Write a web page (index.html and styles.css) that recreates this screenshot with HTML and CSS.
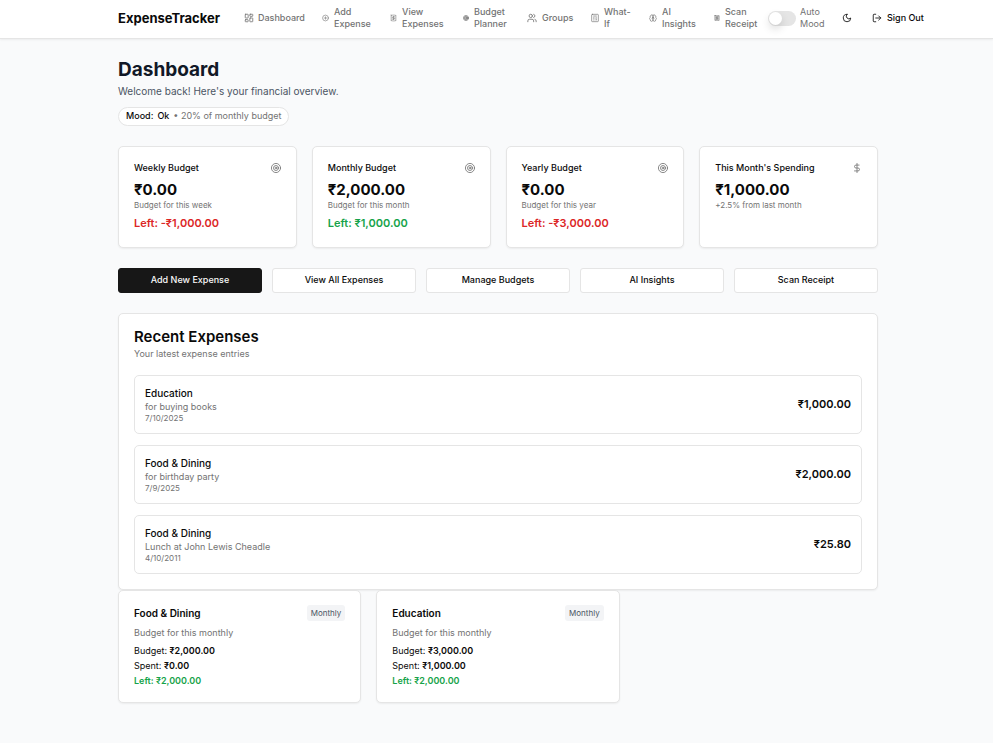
FILE: index.html
```html
<!DOCTYPE html>
<html lang="en">
<head>
<meta charset="utf-8">
<meta name="viewport" content="width=device-width, initial-scale=1">
<title>ExpenseTracker</title>
<link rel="stylesheet" href="styles.css">
</head>
<body>
<header class="topbar">
  <div class="container topbar-row">
    <a class="brand" href="#">ExpenseTracker</a>
    <nav class="nav">
      <a class="wide" href="#"><svg class="icon w10" viewBox="0 0 24 24"><rect x="3" y="3" width="7" height="9" rx="1"/><rect x="14" y="3" width="7" height="5" rx="1"/><rect x="14" y="12" width="7" height="9" rx="1"/><rect x="3" y="16" width="7" height="5" rx="1"/></svg><span>Dashboard</span></a>
      <a href="#"><svg class="icon w7" viewBox="0 0 24 24"><circle cx="12" cy="12" r="10"/><path d="M8 12h8M12 8v8"/></svg><span>Add<br>Expense</span></a>
      <a href="#"><svg class="icon w7" viewBox="0 0 24 24"><path d="M4 2v20l2-1 2 1 2-1 2 1 2-1 2 1 2-1 2 1V2l-2 1-2-1-2 1-2-1-2 1-2-1-2 1Z"/><path d="M16 8h-6a2 2 0 1 0 0 4h4a2 2 0 1 1 0 4H8M12 17.500V6.500"/></svg><span>View<br>Expenses</span></a>
      <a href="#"><svg class="icon w6 dense" viewBox="0 0 24 24"><circle cx="12" cy="12" r="10"/><circle cx="12" cy="12" r="6"/><circle cx="12" cy="12" r="2"/></svg><span>Budget<br>Planner</span></a>
      <a href="#"><svg class="icon w10" viewBox="0 0 24 24"><path d="M16 21v-2a4 4 0 0 0-4-4H6a4 4 0 0 0-4 4v2"/><circle cx="9" cy="7" r="4"/><path d="M22 21v-2a4 4 0 0 0-3-3.870M16 3.130a4 4 0 0 1 0 7.750"/></svg><span>Groups</span></a>
      <a href="#"><svg class="icon w8" viewBox="0 0 24 24"><rect x="2" y="1" width="20" height="22" rx="2"/><path d="M8 6h8M16 14v4M16 10h.01M12 10h.01M8 10h.01M12 14h.01M8 14h.01M12 18h.01M8 18h.01"/></svg><span>What-<br>If</span></a>
      <a href="#"><svg class="icon w8" viewBox="0 0 24 24"><path d="M12 5a3 3 0 1 0-5.997.125 4 4 0 0 0-2.526 5.770 4 4 0 0 0 .556 6.588A4 4 0 1 0 12 18Z"/><path d="M12 5a3 3 0 1 1 5.997.125 4 4 0 0 1 2.526 5.770 4 4 0 0 1-.556 6.588A4 4 0 1 1 12 18Z"/><path d="M15 13a4.500 4.500 0 0 1-3-4 4.500 4.500 0 0 1-3 4"/></svg><span>AI<br>Insights</span></a>
      <a href="#"><svg class="icon w6 dense" viewBox="0 0 24 24"><path d="M4 2v20l2-1 2 1 2-1 2 1 2-1 2 1 2-1 2 1V2l-2 1-2-1-2 1-2-1-2 1-2-1-2 1Z"/><path d="M16 8h-6a2 2 0 1 0 0 4h4a2 2 0 1 1 0 4H8M12 17.500V6.500"/></svg><span>Scan<br>Receipt</span></a>
    </nav>
    <label class="mood-switch"><input type="checkbox" role="switch"><span>Auto<br>Mood</span></label>
    <button class="theme" type="button" aria-label="Toggle theme"><svg class="icon w10" viewBox="0 0 24 24"><path d="M12 3a6 6 0 0 0 9 9 9 9 0 1 1-9-9Z"/></svg></button>
    <button class="signout" type="button"><svg class="icon w10" viewBox="0 0 24 24"><path d="M9 21H5a2 2 0 0 1-2-2V5a2 2 0 0 1 2-2h4M16 17l5-5-5-5M21 12H9"/></svg>Sign Out</button>
  </div>
</header>
<main class="container">
  <h1>Dashboard</h1>
  <p class="welcome">Welcome back! Here's your financial overview.</p>
  <div class="mood"><strong>Mood:</strong><span>Ok</span><span class="muted">• 20% of monthly budget</span></div>

  <section class="stats">
    <article class="card stat">
      <header><h2>Weekly Budget</h2><svg class="icon w10" viewBox="0 0 24 24"><circle cx="12" cy="12" r="11"/><circle cx="12" cy="12" r="6"/><circle cx="12" cy="12" r="2"/></svg></header>
      <p class="amount">₹0.00</p><p class="note">Budget for this week</p><p class="left over">Left: -₹1,000.00</p>
    </article>
    <article class="card stat">
      <header><h2>Monthly Budget</h2><svg class="icon w10" viewBox="0 0 24 24"><circle cx="12" cy="12" r="11"/><circle cx="12" cy="12" r="6"/><circle cx="12" cy="12" r="2"/></svg></header>
      <p class="amount">₹2,000.00</p><p class="note">Budget for this month</p><p class="left">Left: ₹1,000.00</p>
    </article>
    <article class="card stat">
      <header><h2>Yearly Budget</h2><svg class="icon w10" viewBox="0 0 24 24"><circle cx="12" cy="12" r="11"/><circle cx="12" cy="12" r="6"/><circle cx="12" cy="12" r="2"/></svg></header>
      <p class="amount">₹0.00</p><p class="note">Budget for this year</p><p class="left over">Left: -₹3,000.00</p>
    </article>
    <article class="card stat">
      <header><h2>This Month's Spending</h2><svg class="icon w10" viewBox="0 0 24 24"><path d="M12 1v22M17 5H9.500a3.500 3.500 0 0 0 0 7h5a3.500 3.500 0 0 1 0 7H6"/></svg></header>
      <p class="amount">₹1,000.00</p><p class="note">+2.5% from last month</p>
    </article>
  </section>

  <div class="actions">
    <button class="primary" type="button">Add New Expense</button>
    <button type="button">View All Expenses</button>
    <button type="button">Manage Budgets</button>
    <button type="button">AI Insights</button>
    <button type="button">Scan Receipt</button>
  </div>

  <section class="card recent">
    <h2>Recent Expenses</h2>
    <p class="sub">Your latest expense entries</p>
    <ul class="expenses">
      <li><div><h3>Education</h3><p>for buying books</p><time>7/10/2025</time></div><strong>₹1,000.00</strong></li>
      <li><div><h3>Food &amp; Dining</h3><p>for birthday party</p><time>7/9/2025</time></div><strong>₹2,000.00</strong></li>
      <li><div><h3>Food &amp; Dining</h3><p>Lunch at John Lewis Cheadle</p><time>4/10/2011</time></div><strong>₹25.80</strong></li>
    </ul>
  </section>

  <section class="budgets">
    <article class="card budget">
      <header><h3>Food &amp; Dining</h3><span class="badge">Monthly</span></header>
      <p class="desc">Budget for this monthly</p>
      <p>Budget: <b>₹2,000.00</b></p><p>Spent: <b>₹0.00</b></p><p class="remaining">Left: ₹2,000.00</p>
    </article>
    <article class="card budget">
      <header><h3>Education</h3><span class="badge">Monthly</span></header>
      <p class="desc">Budget for this monthly</p>
      <p>Budget: <b>₹3,000.00</b></p><p>Spent: <b>₹1,000.00</b></p><p class="remaining">Left: ₹2,000.00</p>
    </article>
  </section>
</main>
</body>
</html>
```
FILE: styles.css
```css
* { box-sizing: border-box; }
body {
  margin: 0;
  padding-left: 3px;
  background: #f9fafb;
  color: #0a0a0a;
  font: 9px/12px Inter, "Liberation Sans", sans-serif;
}
h1, h2, h3, p, ul { margin: 0; padding: 0; }
a { color: inherit; text-decoration: none; }
button { font: inherit; font-weight: 500; color: inherit; cursor: pointer; }
.container { max-width: 760px; margin: 0 auto; }

.icon {
  flex: none;
  fill: none;
  stroke: currentColor;
  stroke-width: 2;
  stroke-linecap: round;
  stroke-linejoin: round;
}
.dense { stroke-width: 3; }
.w6 { width: 6px; height: 10px; }
.w7 { width: 7px; height: 10px; }
.w8 { width: 8px; height: 10px; }
.w10 { width: 10px; height: 10px; }

.topbar {
  margin-left: -3px;
  padding-left: 3px;
  background: #fff;
  border-bottom: 1px solid #e5e5e5;
  box-shadow: 0 1px 2px rgba(0, 0, 0, .06);
}
.topbar-row { display: flex; align-items: center; padding: 6px 0 8px; white-space: nowrap; }
.brand { flex: 0 0 126px; font-size: 13px; line-height: 18px; font-weight: 700; }
.nav {
  display: grid;
  flex: none;
  grid-template-columns: 78px 68px 73px 64px 64px 58px 65px 54px;
  color: #737373;
  font-weight: 500;
}
.nav a { display: flex; align-items: center; gap: 5px; }
.nav .wide { gap: 4px; }
.mood-switch { display: flex; flex: 0 0 74px; align-items: center; gap: 4px; color: #737373; }
.mood-switch input {
  appearance: none;
  flex: none;
  width: 28px;
  height: 15px;
  margin: 0;
  border-radius: 8px;
  background: #e5e5e5;
}
.mood-switch input::before {
  content: "";
  display: block;
  width: 13px;
  height: 13px;
  margin: 1px;
  border-radius: 50%;
  background: #fff;
  box-shadow: 0 4px 8px rgba(0, 0, 0, .14);
}
.mood-switch input:checked::before { margin-left: 14px; }
.theme, .signout { display: flex; flex: none; align-items: center; padding: 0; border: 0; background: none; }
.theme { width: 30px; }
.signout { gap: 5px; }

main { padding: 20px 0 40px; }
h1 { color: #111827; font-size: 19px; line-height: 22px; font-weight: 700; }
.welcome { margin-top: 3px; color: #4b5563; font-size: 10px; line-height: 14px; }
.mood {
  display: flex;
  gap: 4px;
  width: fit-content;
  margin-top: 9px;
  padding: 2px 7px 3px;
  border: 1px solid #e5e5e5;
  border-radius: 10px;
  background: #fff;
  line-height: 12px;
}
.mood strong, .mood span:not(.muted) { font-weight: 500; }
.muted { color: #737373; }

.card {
  border: 1px solid #e5e5e5;
  border-radius: 5px;
  background: #fff;
  box-shadow: 0 1px 2px rgba(0, 0, 0, .06);
}
.stats { display: grid; grid-template-columns: repeat(4, 1fr); gap: 15px; margin-top: 20px; }
.stat { padding: 15px; }
.stat header { display: flex; align-items: center; justify-content: space-between; }
.stat h2 { font-size: 9px; line-height: 12px; font-weight: 500; }
.stat .icon { color: #737373; }
.amount { margin-top: 6px; font-size: 15px; line-height: 20px; font-weight: 700; }
.note { color: #737373; font-size: 8px; line-height: 10px; }
.left { margin-top: 5px; margin-bottom: 1px; color: #16a34a; font-size: 11px; line-height: 16px; font-weight: 600; }
.left.over { color: #dc2626; }

.actions { display: grid; grid-template-columns: repeat(5, 1fr); gap: 10px; margin-top: 20px; }
.actions button { height: 25px; padding: 0 0 2px; border: 1px solid #e5e5e5; border-radius: 3px; background: #fff; }
.actions .primary { border-color: #171717; background: #171717; color: #fafafa; }

.recent { margin-top: 20px; padding: 14px 15px 15px; }
.recent h2 { font-size: 15px; line-height: 17px; font-weight: 600; }
.sub { margin-top: 3px; color: #737373; line-height: 12px; }
.expenses { display: grid; gap: 11px; margin-top: 15px; list-style: none; }
.expenses li {
  display: flex;
  align-items: center;
  justify-content: space-between;
  padding: 10px;
  border: 1px solid #e5e5e5;
  border-radius: 5px;
}
.expenses h3 { font-size: 10px; line-height: 15px; font-weight: 500; }
.expenses p { color: #737373; }
.expenses time { display: block; color: #737373; font-size: 8px; line-height: 10px; }
.expenses strong { padding-bottom: 1px; font-size: 11px; font-weight: 600; }

.budgets { display: grid; grid-template-columns: repeat(3, 1fr); gap: 15px; }
.budget { padding: 14px 15px; }
.budget header { display: flex; align-items: center; justify-content: space-between; }
.budget h3 { font-size: 10px; line-height: 16px; font-weight: 600; }
.badge { padding: 2px 4px; border-radius: 3px; background: #f3f4f6; color: #4b5563; font-size: 8px; line-height: 12px; }
.budget p { line-height: 15px; }
.budget .desc { margin: 4px 0 3px; color: #737373; }
.budget b { font-weight: 600; }
.budget .remaining { color: #16a34a; font-weight: 600; }
```
